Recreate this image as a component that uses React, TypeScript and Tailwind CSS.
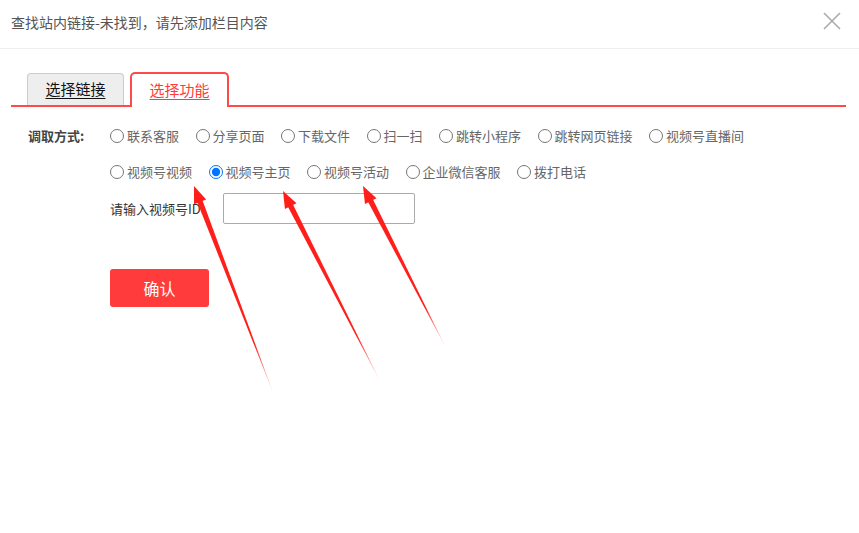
import React from 'react';

type Arrow = { tip: [number, number]; tail: [number, number] };

const arrows: Arrow[] = [
    { tip: [194, 186], tail: [274, 395] },
    { tip: [283, 191], tail: [381, 383] },
    { tip: [363, 186], tail: [446, 348] },
];

const row1 = ['联系客服', '分享页面', '下载文件', '扫一扫', '跳转小程序', '跳转网页链接', '视频号直播间'];
const row2 = ['视频号视频', '视频号主页', '视频号活动', '企业微信客服', '拨打电话'];

const font = { fontFamily: '"Microsoft YaHei", "Noto Sans CJK SC", "Liberation Sans", sans-serif' };

function arrowShape(a: Arrow) {
    const [tx, ty] = a.tip;
    const [bx, by] = a.tail;
    const len = Math.hypot(bx - tx, by - ty);
    const ux = (bx - tx) / len;
    const uy = (by - ty) / len;
    const nx = -uy;
    const ny = ux;
    const headLen = 17;
    const headW = 6.5;
    const shaftW = 2.8;
    const hx = tx + ux * headLen;
    const hy = ty + uy * headLen;
    const head = [
        [tx, ty],
        [hx + nx * headW, hy + ny * headW],
        [hx - nx * headW, hy - ny * headW],
    ];
    const shaft = [
        [hx - ux * 3 + nx * shaftW, hy - uy * 3 + ny * shaftW],
        [bx, by],
        [hx - ux * 3 - nx * shaftW, hy - uy * 3 - ny * shaftW],
    ];
    const pts = (p: number[][]) => p.map((q) => q.join(',')).join(' ');
    return { head: pts(head), shaft: pts(shaft) };
}

const Radio: React.FC<{ label: string; checked?: boolean }> = ({ label, checked }) => (
    <label className="flex items-center mr-[16.5px] text-[13px] text-[#666] whitespace-nowrap">
        <input type="radio" name="mode" defaultChecked={checked} className="w-[14px] h-[14px] mr-[3px] accent-[#0075ff]" />
        <span>{label}</span>
    </label>
);

export default function App() {
    return (
        <div className="relative w-[859px] h-[533px] bg-white overflow-hidden" style={font}>
            <div className="h-[49px] border-b border-[#eeeeee] flex items-center justify-between pl-[11px] pr-[18px]">
                <span className="text-[14px] text-[#555] -mt-[3px]">查找站内链接-未找到，请先添加栏目内容</span>
                <svg width="18" height="18" viewBox="0 0 18 18" className="-mt-[7px]">
                    <path d="M1 1 L17 17 M17 1 L1 17" stroke="#aaaaaa" strokeWidth="1.6" />
                </svg>
            </div>

            <div className="pt-[23px] pl-[11px] pr-[13px]">
                <div className="flex items-end border-b-2 border-[#ff4a4a] pl-[16px] h-[35px]">
                    <div className="w-[97px] h-[32px] bg-[#eeeeee] border border-b-0 border-[#cccccc] rounded-t-[4px] flex items-center justify-center text-[15px] text-[#111] underline underline-offset-[3px]">
                        选择链接
                    </div>
                    <div className="ml-[6px] w-[99px] h-[35px] -mb-[2px] bg-white border-2 border-b-0 border-[#ff4a4a] rounded-t-[5px] flex items-center justify-center text-[15px] text-[#ff3b3b] underline underline-offset-[3px]">
                        选择功能
                    </div>
                </div>
            </div>

            <div className="mt-[11px] pl-[28px]">
                <div className="flex h-[36px] items-center">
                    <span className="w-[82px] text-[13px] font-bold text-[#444]">调取方式:</span>
                    {row1.map((r) => (
                        <Radio key={r} label={r} />
                    ))}
                </div>
                <div className="flex h-[36px] items-center pl-[82px]">
                    {row2.map((r) => (
                        <Radio key={r} label={r} checked={r === '视频号主页'} />
                    ))}
                </div>
                <div className="flex items-center pl-[82px] mt-[3px]">
                    <span className="w-[113px] text-[13px] text-[#333]">请输入视频号ID:</span>
                    <input className="w-[192px] h-[31px] border border-[#aaaaaa] rounded-[2px] outline-none px-2 text-[13px]" />
                </div>
                <div className="pl-[82px] mt-[45px]">
                    <button className="w-[99px] h-[38px] bg-[#ff3b3b] rounded-[3px] text-white text-[16px]">确认</button>
                </div>
            </div>

            <svg className="absolute inset-0 pointer-events-none" width="859" height="533">
                <defs>
                    {arrows.map((a, i) => (
                        <linearGradient
                            key={i}
                            id={`fade${i}`}
                            gradientUnits="userSpaceOnUse"
                            x1={a.tip[0]}
                            y1={a.tip[1]}
                            x2={a.tail[0]}
                            y2={a.tail[1]}
                        >
                            <stop offset="0" stopColor="#ff1f1a" stopOpacity="1" />
                            <stop offset="0.75" stopColor="#ff1f1a" stopOpacity="1" />
                            <stop offset="1" stopColor="#ff1f1a" stopOpacity="0.1" />
                        </linearGradient>
                    ))}
                </defs>
                {arrows.map((a, i) => {
                    const s = arrowShape(a);
                    return (
                        <g key={i}>
                            <polygon points={s.shaft} fill={`url(#fade${i})`} />
                            <polygon points={s.head} fill="#ff1f1a" />
                        </g>
                    );
                })}
            </svg>
        </div>
    );
}
